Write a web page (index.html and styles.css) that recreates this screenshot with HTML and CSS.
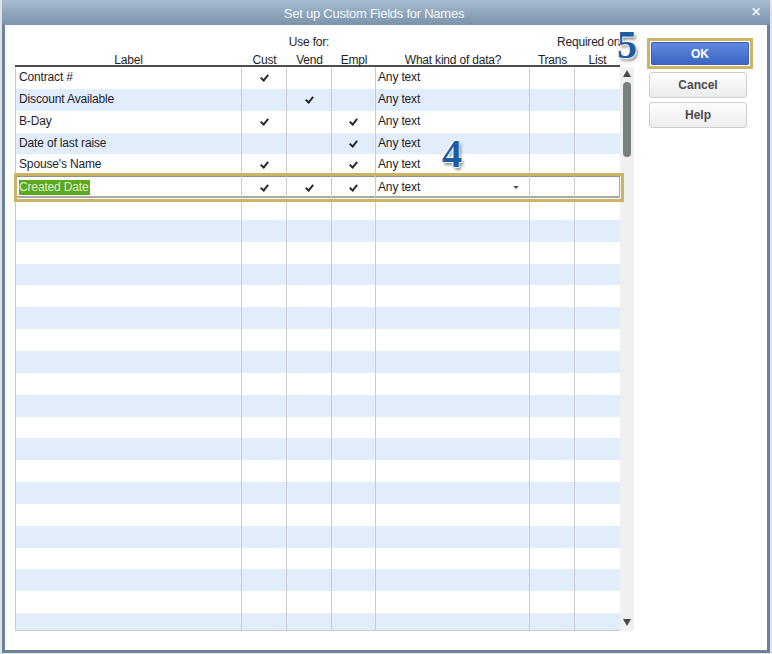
FILE: index.html
```html
<!DOCTYPE html>
<html>
<head>
<meta charset="utf-8">
<title>Set up Custom Fields for Names</title>
<link rel="stylesheet" href="styles.css">
</head>
<body>
<div class="window">
  <div class="titlebar">
    <span class="title">Set up Custom Fields for Names</span>
    <span class="close">✕</span>
  </div>
  <div class="body">
    <div class="main">
      <div class="header">
        <div class="hrow hrow1">
          <span class="usefor">Use for:</span>
          <span class="reqon">Required on</span>
        </div>
        <div class="hrow hrow2">
          <span>Label</span><span>Cust</span><span>Vend</span><span>Empl</span><span>What kind of data?</span><span>Trans</span><span>List</span>
        </div>
      </div>
      <div class="gridwrap">
        <div class="grid">
          <div class="row"><span>Contract #</span><span class="ck"></span><span></span><span></span><span class="data">Any text</span><span></span><span></span></div>
          <div class="row"><span>Discount Available</span><span></span><span class="ck"></span><span></span><span class="data">Any text</span><span></span><span></span></div>
          <div class="row"><span>B-Day</span><span class="ck"></span><span></span><span class="ck"></span><span class="data">Any text</span><span></span><span></span></div>
          <div class="row"><span>Date of last raise</span><span></span><span></span><span class="ck"></span><span class="data">Any text</span><span></span><span></span></div>
          <div class="row"><span>Spouse's Name</span><span class="ck"></span><span></span><span class="ck"></span><span class="data">Any text</span><span></span><span></span></div>
          <div class="row edit"><span><span class="sel">Created Date</span></span><span class="ck"></span><span class="ck"></span><span class="ck"></span><span class="data">Any text<span class="dd"></span></span><span></span><span></span></div>
          <div class="row"><span></span><span></span><span></span><span></span><span></span><span></span><span></span></div>
          <div class="row"><span></span><span></span><span></span><span></span><span></span><span></span><span></span></div>
          <div class="row"><span></span><span></span><span></span><span></span><span></span><span></span><span></span></div>
          <div class="row"><span></span><span></span><span></span><span></span><span></span><span></span><span></span></div>
          <div class="row"><span></span><span></span><span></span><span></span><span></span><span></span><span></span></div>
          <div class="row"><span></span><span></span><span></span><span></span><span></span><span></span><span></span></div>
          <div class="row"><span></span><span></span><span></span><span></span><span></span><span></span><span></span></div>
          <div class="row"><span></span><span></span><span></span><span></span><span></span><span></span><span></span></div>
          <div class="row"><span></span><span></span><span></span><span></span><span></span><span></span><span></span></div>
          <div class="row"><span></span><span></span><span></span><span></span><span></span><span></span><span></span></div>
          <div class="row"><span></span><span></span><span></span><span></span><span></span><span></span><span></span></div>
          <div class="row"><span></span><span></span><span></span><span></span><span></span><span></span><span></span></div>
          <div class="row"><span></span><span></span><span></span><span></span><span></span><span></span><span></span></div>
          <div class="row"><span></span><span></span><span></span><span></span><span></span><span></span><span></span></div>
          <div class="row"><span></span><span></span><span></span><span></span><span></span><span></span><span></span></div>
          <div class="row"><span></span><span></span><span></span><span></span><span></span><span></span><span></span></div>
          <div class="row"><span></span><span></span><span></span><span></span><span></span><span></span><span></span></div>
          <div class="row"><span></span><span></span><span></span><span></span><span></span><span></span><span></span></div>
          <div class="row"><span></span><span></span><span></span><span></span><span></span><span></span><span></span></div>
          <div class="row"><span></span><span></span><span></span><span></span><span></span><span></span><span></span></div>
        </div>
        <div class="scroll">
          <span class="arr-up"></span>
          <span class="thumb"></span>
          <span class="arr-down"></span>
        </div>
        <div class="mark"></div>
        <div class="num num4">4</div>
      </div>
    </div>
    <div class="buttons">
      <div class="okwrap"><button class="btn ok">OK</button></div>
      <button class="btn cancel">Cancel</button>
      <button class="btn help">Help</button>
    </div>
    <div class="num num5">5</div>
  </div>
</div>
</body>
</html>
```

FILE: styles.css
```css
* { box-sizing: border-box; }

body {
  margin: 0;
  width: 772px;
  height: 654px;
  overflow: hidden;
  background: #dde3e9;
  font-family: "Liberation Sans", Arial, sans-serif;
  font-size: 12px;
  color: #1e1e26;
}

.window {
  margin-left: 2px;
  width: 768px;
  height: 653px;
  display: flex;
  flex-direction: column;
  background: #fff;
}

.titlebar {
  height: 25px;
  flex: none;
  display: flex;
  background: linear-gradient(#a8bbce, #7a93ac);
  color: #f6f8fa;
}

.title {
  flex: 1;
  text-align: center;
  font-size: 13px;
  letter-spacing: -0.25px;
  padding-top: 3px;
  line-height: 22px;
}

.close {
  width: 20px;
  margin-right: 4px;
  text-align: center;
  font-size: 12px;
  font-weight: bold;
  line-height: 25px;
  color: #eef2f6;
}

.body {
  flex: 1;
  position: relative;
  display: flex;
  border: 3px solid #6b8298;
  border-top: 0;
  background: #fff;
}

.main {
  margin-left: 10px;
  width: 619px;
}

.header {
  width: 605px;
  border-bottom: 2px solid #4f4f4f;
  letter-spacing: -0.2px;
}

.hrow {
  display: grid;
  grid-template-columns: 227px 45px 45px 44px 154px 45px 45px;
  line-height: 11px;
}

.hrow span {
  text-align: center;
  white-space: nowrap;
}

.hrow1 {
  height: 22px;
  padding-top: 12px;
}

.hrow2 {
  height: 18px;
  padding-top: 8px;
}

.usefor { grid-column: 2 / 5; }

.reqon {
  grid-column: 6 / 8;
  text-align: left !important;
  padding-left: 27px;
}

.gridwrap {
  position: relative;
  display: flex;
  height: 564px;
}

.grid {
  width: 605px;
  height: 564px;
  overflow: hidden;
  border-left: 1px solid #c9c9c9;
  border-bottom: 1px solid #c9c9c9;
}

.row {
  display: grid;
  grid-template-columns: 226px 45px 45px 44px 154px 45px 45px;
  height: 21.85px;
  line-height: 20px;
  letter-spacing: -0.15px;
}

.row:nth-child(even) { background: #e2edfc; }

.row > span {
  border-right: 1px solid #cbcbcb;
  padding-left: 3px;
  white-space: nowrap;
  overflow: hidden;
}

.row > span:last-child { border-right: 0; }

.row > .data { padding-left: 2px; }

.row > .ck {
  padding-left: 0;
  text-align: center;
}

.ck::after {
  content: "";
  display: inline-block;
  width: 3px;
  height: 6px;
  margin-top: 6px;
  border: solid #2a2a2a;
  border-width: 0 2px 2px 0;
  transform: rotate(40deg);
  vertical-align: top;
}

.row.edit {
  background: #fff;
  box-shadow: inset 0 1px #8f8f8f, inset 0 -2px #a9a9a9, inset -1px 0 #a9a9a9;
}

.row.edit > span { padding-top: 1px; }

.sel {
  background: #5ca81f;
  color: #def3cc;
  padding-bottom: 1px;
  border-right: 1px solid #b05ee0;
}

.dd {
  float: right;
  width: 0;
  height: 0;
  margin: 9px 10px 0 0;
  border-left: 3px solid transparent;
  border-right: 3px solid transparent;
  border-top: 3px solid #555;
}

.scroll {
  width: 14px;
  height: 564px;
  background: #f0f0f0;
  display: flex;
  flex-direction: column;
  align-items: center;
}

.arr-up {
  margin-top: 3px;
  width: 0;
  height: 0;
  border-left: 4px solid transparent;
  border-right: 4px solid transparent;
  border-bottom: 7px solid #4a4a4a;
}

.thumb {
  margin-top: 5px;
  width: 8px;
  height: 75px;
  border-radius: 4px;
  background: #798080;
}

.arr-down {
  margin-top: auto;
  margin-bottom: 5px;
  width: 0;
  height: 0;
  border-left: 4px solid transparent;
  border-right: 4px solid transparent;
  border-top: 7px solid #4a4a4a;
}

.mark {
  position: absolute;
  left: -1px;
  top: 106px;
  width: 610px;
  height: 29px;
  border: 3px solid #cab566;
  pointer-events: none;
}

.num {
  position: absolute;
  font-family: "Liberation Serif", "Times New Roman", serif;
  font-weight: bold;
  font-size: 40px;
  line-height: 40px;
  color: #1d5ca2;
  text-shadow: -1px -1px 0 #fff, 1px 1px 0 #e8eef5, 2px 3px 3px rgba(0, 0, 0, 0.45);
}

.num4 { left: 427px; top: 67px; }
.num5 { left: 612px; top: 0px; }

.buttons {
  margin-left: 13px;
  padding-top: 13px;
  width: 106px;
  display: flex;
  flex-direction: column;
}

.okwrap {
  height: 31px;
  border: 3px solid #cab566;
  padding: 1px;
}

.btn {
  display: block;
  width: 98px;
  height: 26px;
  margin-left: 2px;
  padding: 0;
  font-family: "Liberation Sans", Arial, sans-serif;
  font-size: 12px;
  font-weight: bold;
  color: #4a4a4a;
  border: 1px solid #cfcfcf;
  border-radius: 3px;
  background: linear-gradient(#fdfdfd, #ececec);
}

.btn.ok {
  margin: 0;
  height: 23px;
  color: #fff;
  border: 1px solid #3b5fb7;
  border-radius: 1px;
  background: linear-gradient(#6089de, #3d65c5);
}

.cancel { margin-top: 3px; }
.help { margin-top: 4px; }
```
